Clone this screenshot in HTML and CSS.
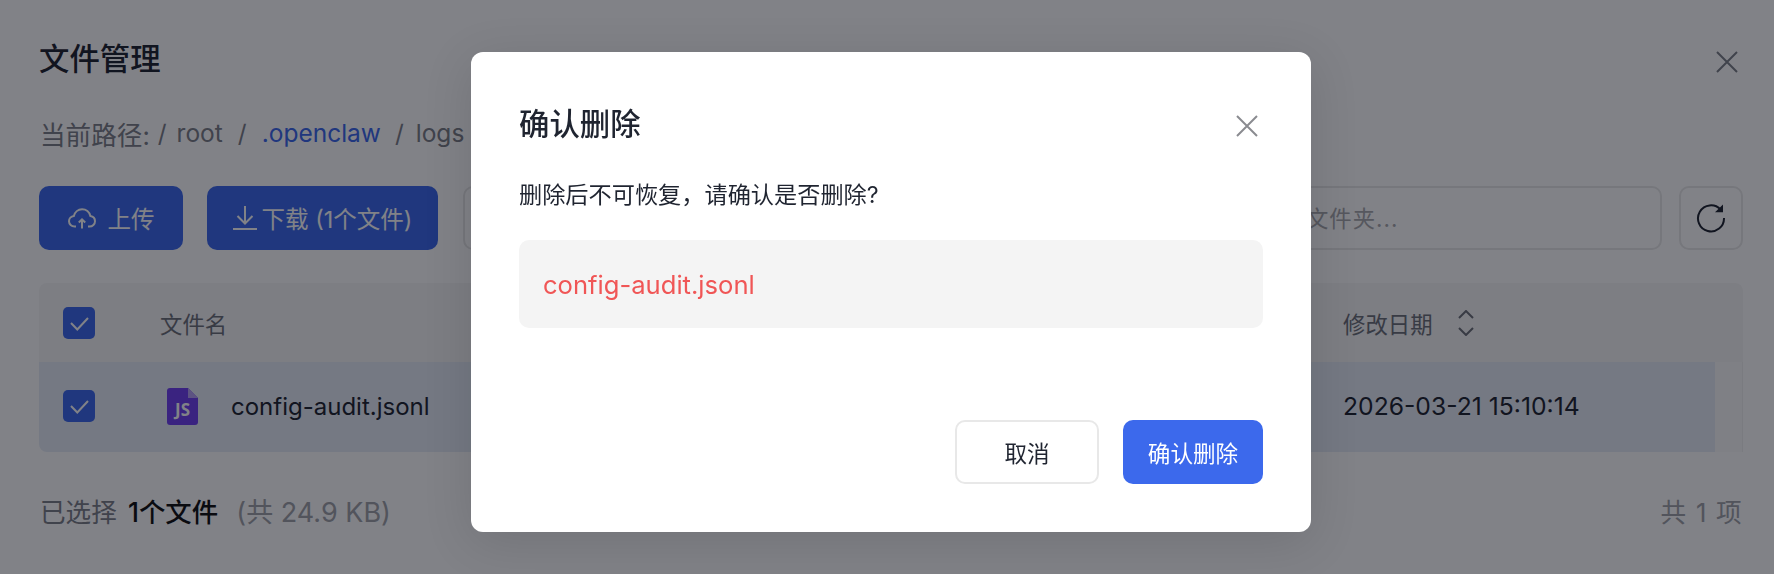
FILE: index.html
```html
<!DOCTYPE html>
<html lang="zh-CN">
<head>
  <meta charset="UTF-8" />
  <meta name="viewport" content="width=device-width, initial-scale=1.0" />
  <title>文件管理</title>
  <link rel="stylesheet" href="styles.css">
</head>
<body>
  <div class="page">
    <div class="page-head">
      <h1>文件管理</h1>
      <svg class="close-icon" viewBox="0 0 22 22"><path d="M1 1L21 21M21 1L1 21" /></svg>
    </div>

    <div class="path">
      <span class="path-label">当前路径:</span>
      <span class="sep first">/</span>
      <span>root</span>
      <span class="sep">/</span>
      <a class="path-link">.openclaw</a>
      <span class="sep">/</span>
      <span class="path-last">logs</span>
    </div>

    <div class="toolbar">
      <button class="btn-primary upload">
        <svg class="cloud-icon" viewBox="0 0 28 21"><path d="M8 18.500H6.600C3.500 18.500 1 16.200 1 13.300c0-2.700 2.100-4.900 4.800-5.200C6.700 4.100 10.100 1.200 14.100 1.200c4 0 7.300 2.800 8.200 6.700 2.700.4 4.700 2.600 4.700 5.300 0 2.900-2.400 5.300-5.500 5.300H20" /><path d="M14 20.500V11.500M10.800 14.500L14 11.300L17.200 14.500" /></svg>
        上传
      </button>
      <button class="btn-primary download">
        <svg class="down-icon" viewBox="0 0 24 24"><path d="M12 0V17.500M4.500 10L12 17.500L19.500 10" /><path d="M0 23H24" /></svg>
        下载 (1个文件)
      </button>
      <div class="filter-box"></div>
      <input class="search" type="text" placeholder="搜索文件或文件夹..." />
      <button class="btn-refresh">
        <svg class="refresh-icon" viewBox="0 0 30 30"><path d="M24.500 6.500A13 13 0 1 0 28 15" /><path class="arrow-head" d="M19 9.300H27V1.500Z" /></svg>
      </button>
    </div>

    <div class="table">
      <div class="table-row table-head">
        <div class="col-check"><span class="checkbox"><svg viewBox="0 0 32 32"><path d="M8 16L14.300 22.500L25 11" /></svg></span></div>
        <div class="col-name">文件名</div>
        <div class="col-date">
          修改日期
          <svg class="sort-icon" viewBox="0 0 16 26"><path d="M1 8L8 1L15 8M1 18L8 25L15 18" /></svg>
        </div>
      </div>
      <div class="table-row table-body">
        <div class="row-fill">
          <div class="col-check"><span class="checkbox"><svg viewBox="0 0 32 32"><path d="M8 16L14.300 22.500L25 11" /></svg></span></div>
          <div class="col-name file-cell">
            <svg class="file-icon" viewBox="0 0 31 37">
              <path class="file-body" d="M3 0H21L31 10V34A3 3 0 0 1 28 37H3A3 3 0 0 1 0 34V3A3 3 0 0 1 3 0Z" />
              <path class="file-fold" d="M21 0L31 10H21Z" />
              <text class="file-text" x="15.500" y="28">JS</text>
            </svg>
            <span>config-audit.jsonl</span>
          </div>
          <div class="col-date date-cell">2026-03-21 15:10:14</div>
        </div>
        <div class="row-tail"></div>
      </div>
    </div>

    <div class="page-foot">
      <div class="selected">
        已选择 <strong>1个文件</strong> <span class="total-size">(共 24.9 KB)</span>
      </div>
      <div class="count">共 1 项</div>
    </div>
  </div>

  <div class="overlay">
    <div class="modal">
      <div class="modal-head">
        <h2>确认删除</h2>
        <svg class="modal-close" viewBox="0 0 22 22"><path d="M1 1L21 21M21 1L1 21" /></svg>
      </div>
      <p class="modal-text">删除后不可恢复&#65292;请确认是否删除?</p>
      <div class="file-box">config-audit.jsonl</div>
      <div class="modal-foot">
        <button class="btn-cancel">取消</button>
        <button class="btn-confirm">确认删除</button>
      </div>
    </div>
  </div>
</body>
</html>
```

FILE: styles.css
```css
* {
  box-sizing: border-box;
}

html, body {
  height: 100%;
}

body {
  margin: 0;
  background-color: #fff;
  color: #1f2430;
  font-family: Inter, "Noto Sans CJK SC", sans-serif;
  font-size: 22.4px;
  overflow: hidden;
}

button, input {
  font-family: inherit;
}

.page {
  padding: 40px 31px 0 39px;
}

.page-head {
  display: flex;
  justify-content: space-between;
  align-items: center;
  height: 40px;
}

h1, h2 {
  margin: 0;
  font-size: 30.4px;
  font-weight: 500;
  line-height: 38px;
}

h1 {
  margin-bottom: 2px;
}

.close-icon {
  width: 22px;
  height: 22px;
  margin-top: 4px;
  margin-right: 5px;
  fill: none;
  stroke: #7d8088;
  stroke-width: 2;
}

.path {
  display: flex;
  align-items: center;
  height: 36px;
  margin-top: 35px;
  padding-left: 1px;
  color: #7d8088;
  font-size: 24.5px;
}

.path-label {
  font-size: 25.6px;
}

.sep {
  margin: 0 15px 0 15px;
}

.sep.first {
  margin: 0 10px 0 8px;
}

.path-link {
  margin-right: -1px;
  color: #3c69ec;
}

.path-last {
  margin-left: -3px;
}

.toolbar {
  display: flex;
  height: 64px;
  margin-top: 35px;
}

.btn-primary {
  display: flex;
  align-items: center;
  justify-content: center;
  height: 64px;
  border: none;
  border-radius: 10px;
  background-color: #3c69ec;
  color: #fff;
  font-size: 23.5px;
}

.upload {
  width: 144px;
  gap: 12px;
  margin-right: 24px;
}

.download {
  width: 231px;
  gap: 5px;
  margin-right: 25px;
}

.cloud-icon {
  width: 28px;
  height: 21px;
  fill: none;
  stroke: #fff;
  stroke-width: 2;
}

.down-icon {
  width: 24px;
  height: 24px;
  fill: none;
  stroke: #fff;
  stroke-width: 2;
}

.filter-box {
  flex: 1;
  border: 2px solid #e8e8e8;
  border-radius: 10px;
}

.search {
  width: 500px;
  margin-left: 16px;
  padding: 0 20px 0 25px;
  border: 2px solid #e8e8e8;
  border-radius: 10px;
  font-size: 22.4px;
  letter-spacing: 1px;
  outline: none;
}

.search::placeholder {
  color: #a8a9ad;
}

.btn-refresh {
  display: flex;
  align-items: center;
  justify-content: center;
  width: 64px;
  margin-left: 17px;
  border: 2px solid #e8e8e8;
  border-radius: 10px;
  background-color: transparent;
}

.refresh-icon {
  width: 30px;
  height: 30px;
  fill: none;
  stroke: #1f2430;
  stroke-width: 2;
}

.arrow-head {
  fill: #1f2430;
  stroke: none;
}

.table {
  margin-top: 33px;
}

.table-row {
  display: flex;
  align-items: center;
}

.table-head {
  height: 79px;
  border-radius: 8px 8px 0 0;
  background-color: #f6f6f7;
  color: #6d7079;
}

.table-body {
  align-items: stretch;
  height: 90px;
}

.row-fill {
  display: flex;
  align-items: center;
  flex: 1;
  padding-bottom: 2px;
  border-radius: 0 0 0 8px;
  background-color: #e6edf7;
}

.row-tail {
  width: 28px;
  border-right: 1px solid #f0f0f0;
  background-color: #fbfbfb;
}

.col-check {
  display: flex;
  width: 121px;
  padding-left: 24px;
}

.checkbox {
  display: block;
  width: 32px;
  height: 32px;
  border-radius: 5px;
  background-color: #3c69ec;
}

.checkbox svg {
  display: block;
  width: 32px;
  height: 32px;
  fill: none;
  stroke: #fff;
  stroke-width: 2;
}

.col-name {
  flex: 1;
}

.file-cell {
  display: flex;
  align-items: center;
  gap: 33px;
  padding-left: 7px;
  font-size: 24px;
}

.file-icon {
  flex: none;
  width: 31px;
  height: 37px;
}

.file-body {
  fill: #7040f0;
}

.file-fold {
  fill: #b7a0f5;
}

.file-text {
  fill: #fff;
  font-family: "Open Sans", sans-serif;
  font-size: 17px;
  font-weight: 700;
  text-anchor: middle;
}

.col-date {
  display: flex;
  align-items: center;
  width: 400px;
}

.date-cell {
  width: 372px;
  font-size: 24.7px;
}

.sort-icon {
  width: 16px;
  height: 26px;
  margin-left: 25px;
  fill: none;
  stroke: #6d7079;
  stroke-width: 2;
}

.page-foot {
  display: flex;
  justify-content: space-between;
  align-items: center;
  height: 36px;
  margin-top: 40px;
  padding-left: 1px;
  font-size: 25.6px;
  color: #7d8088;
}

.selected strong {
  margin: 0 11px 0 4px;
  color: #111;
  font-size: 26.4px;
  font-weight: 500;
}

.total-size {
  color: #a0a2a8;
  font-size: 27px;
}

.count {
  color: #a0a2a8;
  letter-spacing: 1.3px;
}

.overlay {
  position: fixed;
  inset: 0;
  display: flex;
  align-items: center;
  justify-content: center;
  padding: 10px 0 0 8px;
  background-color: rgba(3, 6, 16, 0.5);
}

.modal {
  display: flex;
  flex-direction: column;
  width: 840px;
  height: 480px;
  padding: 52px 48px 48px;
  border-radius: 12px;
  background-color: #fff;
  box-shadow: 0 10px 50px rgba(0, 0, 0, 0.12);
}

.modal-head {
  display: flex;
  justify-content: space-between;
  align-items: center;
  height: 39px;
}

.modal-close {
  width: 22px;
  height: 22px;
  margin-right: 5px;
  margin-top: 5px;
  fill: none;
  stroke: #8a8b90;
  stroke-width: 2;
}

.modal-text {
  margin: 35px 0 0;
  font-size: 23.2px;
  line-height: 34px;
}

.file-box {
  display: flex;
  align-items: center;
  height: 88px;
  margin-top: 28px;
  padding: 0 24px;
  border-radius: 10px;
  background-color: #f4f4f4;
  color: #f05656;
  font-size: 25.6px;
}

.modal-foot {
  display: flex;
  justify-content: flex-end;
  gap: 24px;
  margin-top: auto;
}

.btn-cancel, .btn-confirm {
  height: 64px;
  border-radius: 10px;
  font-size: 22.6px;
}

.btn-cancel {
  width: 144px;
  border: 2px solid #e8e8e8;
  background-color: #fff;
  color: #1f2430;
}

.btn-confirm {
  width: 140px;
  border: none;
  background-color: #3c69ec;
  color: #fff;
}
```
